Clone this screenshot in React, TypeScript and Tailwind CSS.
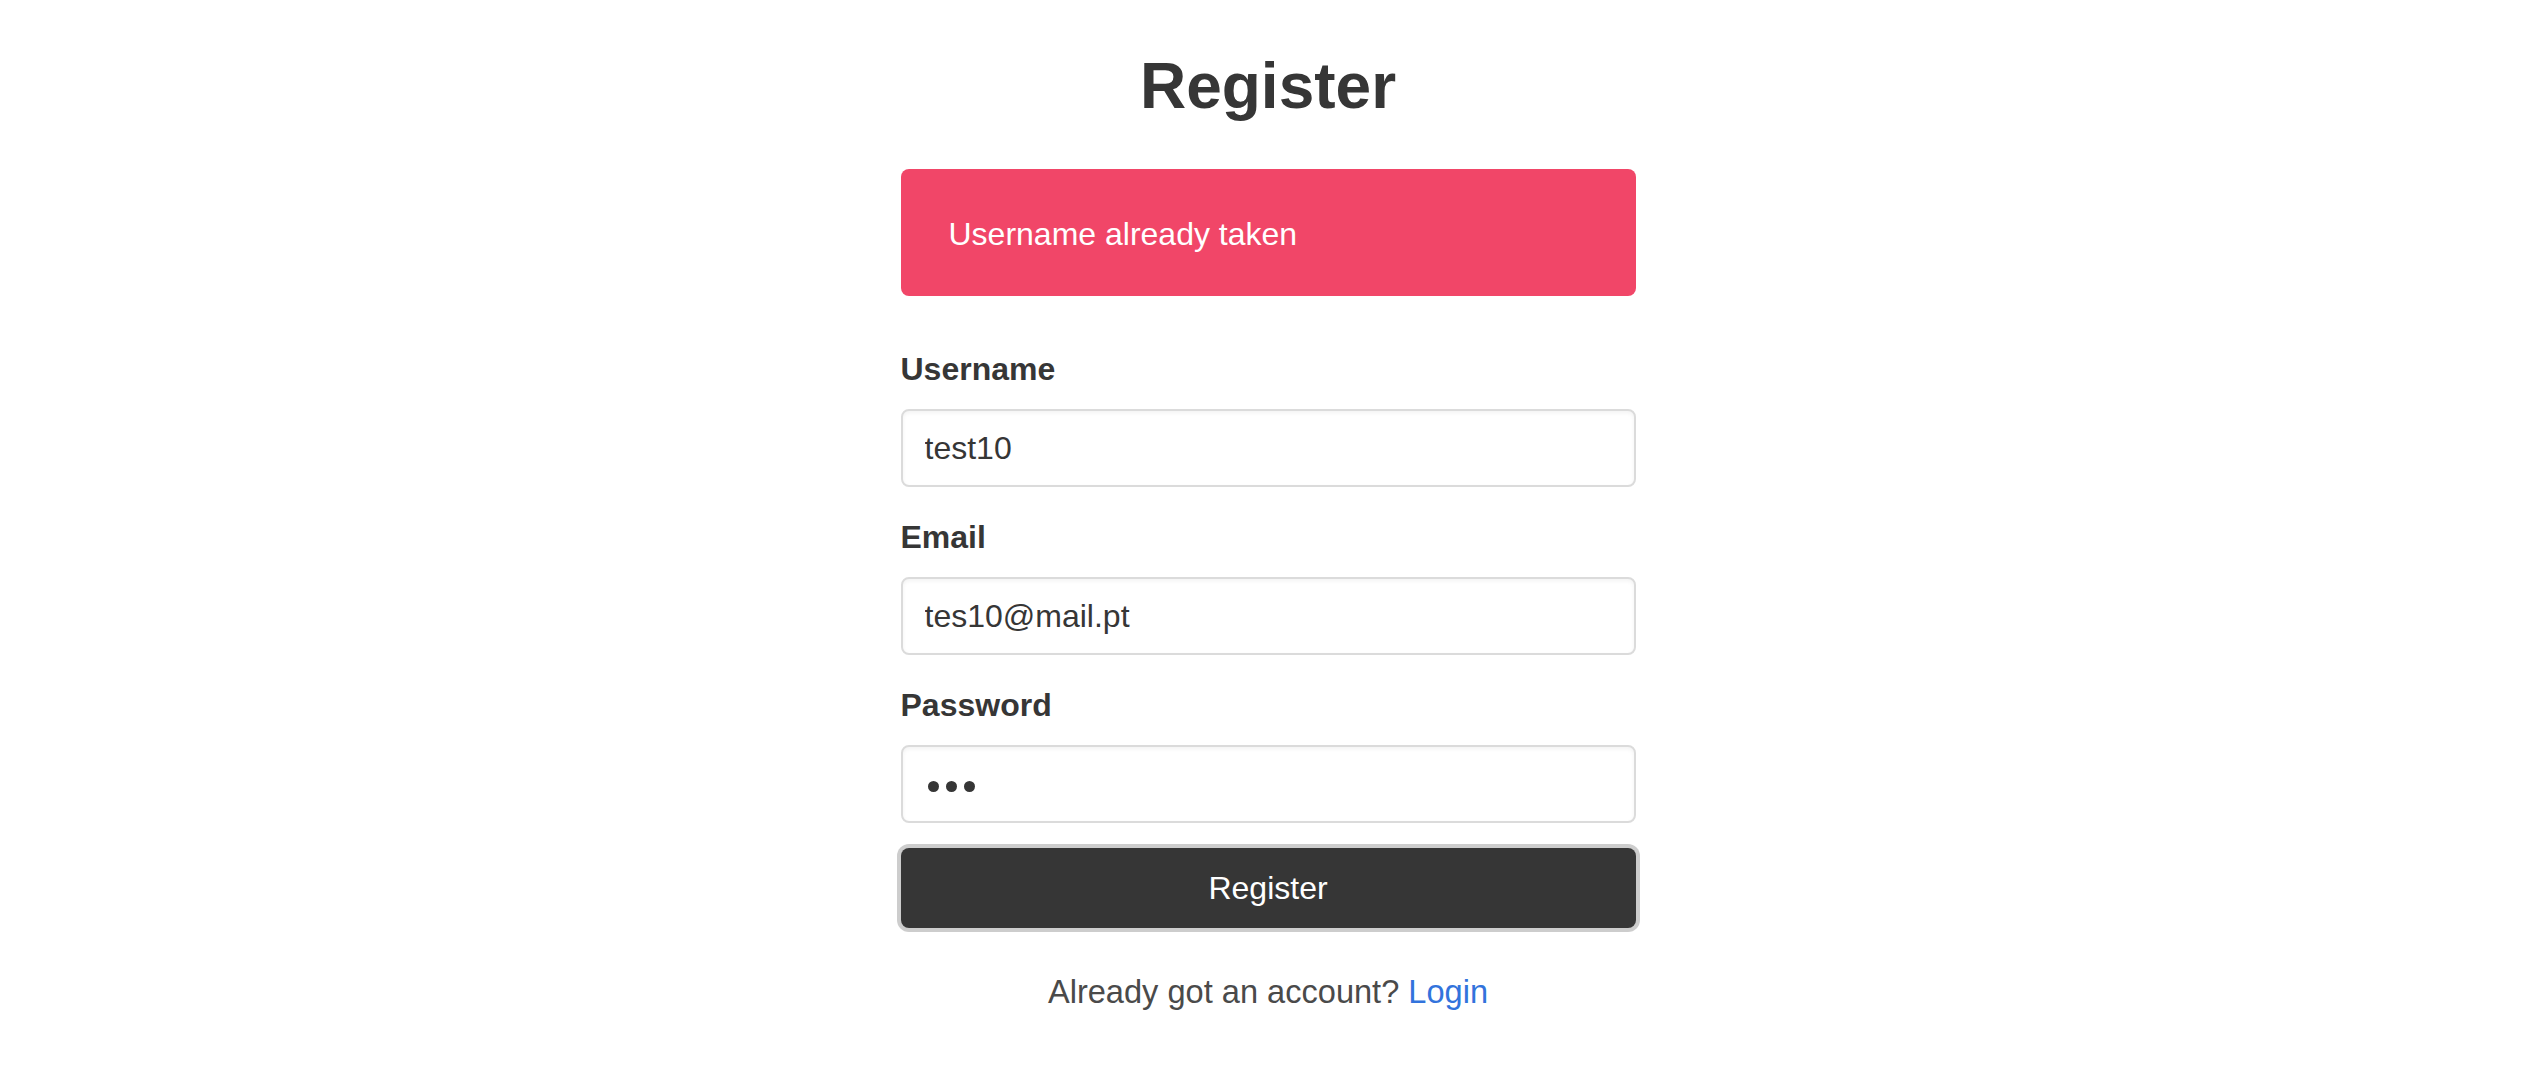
import { useState } from "react";

const font = { fontFamily: '"Liberation Sans", Arial, Helvetica, sans-serif' };

type FieldProps = {
  label: string;
  value: string;
  onChange: (v: string) => void;
  type?: string;
};

function Field({ label, value, onChange, type = "text" }: FieldProps) {
  return (
    <div className="flex flex-col">
      <label className="mb-[16px] text-[32px] font-bold leading-[48px] text-[#363636]">
        {label}
      </label>
      <input
        type={type}
        value={value}
        onChange={(e) => onChange(e.target.value)}
        className="h-[78px] w-full rounded-[8px] border-2 border-[#dbdbdb] bg-white px-[22px] text-[32px] leading-[48px] text-[#363636] shadow-[inset_0_2px_4px_rgba(10,10,10,0.05)] outline-none"
      />
    </div>
  );
}

export default function App() {
  const [username, setUsername] = useState("test10");
  const [email, setEmail] = useState("tes10@mail.pt");
  const [password] = useState("abc");

  return (
    <main
      className="min-h-screen w-full bg-white pr-[7px] pt-[50px]"
      style={font}
    >
      <div className="mx-auto flex w-[735px] flex-col">
        <h1 className="text-center text-[64px] font-bold leading-[72px] text-[#363636]">
          Register
        </h1>

        {/* error notification */}
        <div className="mt-[47px] rounded-[8px] bg-[#f14668] pb-[38px] pl-[48px] pr-[80px] pt-[41px] text-[32px] leading-[48px] text-white">
          Username already taken
        </div>

        <form
          className="mt-[49px] flex flex-col gap-[26px]"
          onSubmit={(e) => e.preventDefault()}
        >
          <Field label="Username" value={username} onChange={setUsername} />
          <Field label="Email" value={email} onChange={setEmail} />

          <div className="flex flex-col">
            <label className="mb-[16px] text-[32px] font-bold leading-[48px] text-[#363636]">
              Password
            </label>
            <div
              aria-label="password"
              className="flex h-[78px] w-full items-center gap-[7px] rounded-[8px] border-2 border-[#dbdbdb] bg-white pl-[25px] pt-[5px] shadow-[inset_0_2px_4px_rgba(10,10,10,0.05)]"
            >
              {password.split("").map((_, i) => (
                <span
                  key={i}
                  className="h-[11px] w-[11px] rounded-full bg-[#363636]"
                />
              ))}
            </div>
          </div>
        </form>

        <button
          type="submit"
          className="mt-[25px] h-[80px] w-full rounded-[8px] bg-[#363636] text-[32px] leading-[48px] text-white shadow-[0_0_0_4px_rgba(54,54,54,0.25)]"
        >
          Register
        </button>

        <p className="mt-[40px] text-center text-[32.6px] leading-[48px] text-[#4a4a4a]">
          Already got an account?{" "}
          <a href="#" className="text-[#3273dc]">
            Login
          </a>
        </p>
      </div>
    </main>
  );
}
